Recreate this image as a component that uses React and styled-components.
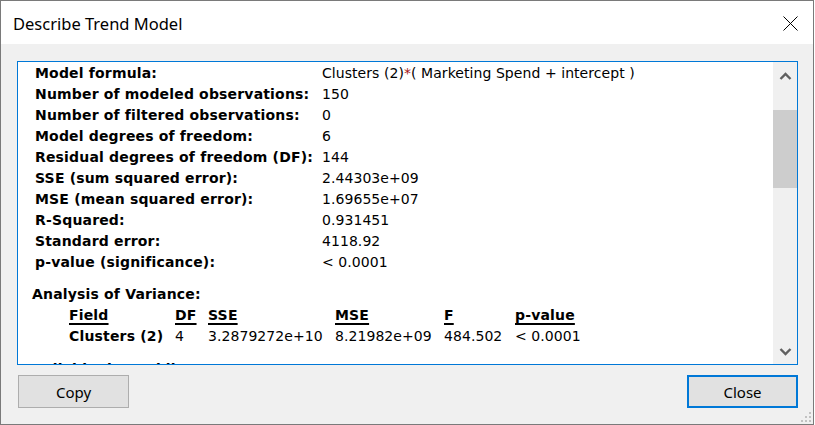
import React from 'react';
import styled, {createGlobalStyle} from 'styled-components';

const GlobalStyle = createGlobalStyle`
  html, body {
    margin: 0;
    padding: 0;
    background: #ffffff;
  }
  * {
    box-sizing: border-box;
  }
`;

const Window = styled.div`
  position: relative;
  width: 814px;
  height: 425px;
  border: 1px solid #7a7a7a;
  display: flex;
  flex-direction: column;
  background: #f0f0f0;
`;

const TitleBar = styled.div`
  height: 43px;
  background: #ffffff;
  display: flex;
  align-items: center;
  justify-content: space-between;
  padding: 0 15px 0 12px;
`;

const Title = styled.div`
  font-family: "Noto Sans", "Open Sans", sans-serif;
  font-size: 16.5px;
  color: #000;
  margin-top: 1px;
`;

const CloseGlyph = styled.svg`
  width: 15px;
  height: 15px;
  margin-top: 1px;
`;

const Body = styled.div`
  flex: 1;
  display: flex;
  flex-direction: column;
  padding: 17px 15px 0 16px;
`;

const Panel = styled.div`
  height: 304px;
  border: 1px solid #0078d7;
  background: #ffffff;
  display: flex;
`;

const Content = styled.div`
  flex: 1;
  overflow: hidden;
  padding: 1px 0 0 17px;
  font-family: "DejaVu Sans", Verdana, sans-serif;
  font-size: 14px;
  line-height: 21px;
  color: #000;
`;

const Summary = styled.div`
  display: grid;
  grid-template-columns: 287px 1fr;
`;

const Label = styled.div`
  font-weight: bold;
  letter-spacing: 0.17px;
  white-space: nowrap;
`;

const Value = styled.div`
  white-space: nowrap;
  letter-spacing: 0.06px;
`;

const Star = styled.span`
  color: #a31515;
`;

const Heading = styled.div`
  font-weight: bold;
  letter-spacing: 0.17px;
  margin: ${p => (p.$last ? '12px' : '11px')} 0 0 -3px;
  white-space: nowrap;
`;

const Table = styled.div`
  display: grid;
  grid-template-columns: 106px 33px 127px 109px 71px 1fr;
  margin-left: 34px;
`;

const Cell = styled.div`
  white-space: nowrap;
  font-weight: ${p => (p.$bold ? 'bold' : 'normal')};
  letter-spacing: ${p => (p.$bold ? '0.17px' : '0.06px')};
  text-decoration: ${p => (p.$head ? 'underline' : 'none')};
  text-decoration-thickness: 2px;
  text-underline-offset: 3px;
`;

const Scrollbar = styled.div`
  width: 24px;
  background: #f0f0f0;
  display: flex;
  flex-direction: column;
`;

const ArrowBox = styled.div`
  height: 25px;
  display: flex;
  align-items: center;
  justify-content: center;
  padding-top: ${p => (p.$down ? '0' : '4px')};
`;

const Track = styled.div`
  flex: 1;
`;

const Thumb = styled.div`
  margin-top: 23px;
  height: 78px;
  background: #cdcdcd;
`;

const ButtonRow = styled.div`
  display: flex;
  justify-content: space-between;
  margin-top: 10px;
  padding-left: 1px;
`;

const Button = styled.div`
  width: 111px;
  height: 33px;
  display: flex;
  align-items: center;
  justify-content: center;
  background: #e1e1e1;
  border: ${p => (p.$primary ? '2px solid #0078d7' : '1px solid #adadad')};
  font-family: "Noto Sans", "Open Sans", sans-serif;
  font-size: 15px;
  color: #000;
`;

const Grip = styled.svg`
  position: absolute;
  right: 0;
  bottom: 0;
  width: 14px;
  height: 14px;
`;

const summary = [
  ['Model formula:', null],
  ['Number of modeled observations:', '150'],
  ['Number of filtered observations:', '0'],
  ['Model degrees of freedom:', '6'],
  ['Residual degrees of freedom (DF):', '144'],
  ['SSE (sum squared error):', '2.44303e+09'],
  ['MSE (mean squared error):', '1.69655e+07'],
  ['R-Squared:', '0.931451'],
  ['Standard error:', '4118.92'],
  ['p-value (significance):', '< 0.0001'],
];

const headers = ['Field', 'DF', 'SSE', 'MSE', 'F', 'p-value'];
const row = ['Clusters (2)', '4', '3.2879272e+10', '8.21982e+09', '484.502', '< 0.0001'];

const Chevron = ({down}) => (
  <svg width="13" height="9" viewBox="0 0 13 9">
    <path
      d={down ? 'M1.5 2 L6.5 7 L11.5 2' : 'M1.5 7 L6.5 2 L11.5 7'}
      fill="none"
      stroke="#606060"
      strokeWidth="2.4"
    />
  </svg>
);

const App = () => {
  return (
    <Window>
      <GlobalStyle />
      <TitleBar>
        <Title>Describe Trend Model</Title>
        <CloseGlyph viewBox="0 0 15 15">
          <path d="M0.5 0.5 L14.5 14.5 M14.5 0.5 L0.5 14.5" stroke="#000" strokeWidth="1" />
        </CloseGlyph>
      </TitleBar>
      <Body>
        <Panel>
          <Content>
            <Summary>
              {summary.map(([label, value]) => (
                <React.Fragment key={label}>
                  <Label>{label}</Label>
                  <Value>
                    {value === null ? (
                      <>Clusters (2)<Star>*</Star>( Marketing Spend + intercept )</>
                    ) : value}
                  </Value>
                </React.Fragment>
              ))}
            </Summary>
            <Heading>Analysis of Variance:</Heading>
            <Table>
              {headers.map(h => (
                <Cell key={h} $bold $head>{h}</Cell>
              ))}
              {row.map((c, i) => (
                <Cell key={i} $bold={i === 0}>{c}</Cell>
              ))}
            </Table>
            <Heading $last>Individual trend lines:</Heading>
          </Content>
          <Scrollbar>
            <ArrowBox><Chevron /></ArrowBox>
            <Track><Thumb /></Track>
            <ArrowBox $down><Chevron down /></ArrowBox>
          </Scrollbar>
        </Panel>
        <ButtonRow>
          <Button>Copy</Button>
          <Button $primary>Close</Button>
        </ButtonRow>
      </Body>
      <Grip viewBox="0 0 14 14">
        {[[10, 2], [6, 6], [10, 6], [2, 10], [6, 10], [10, 10]].map(([x, y]) => (
          <rect key={`${x}-${y}`} x={x} y={y} width="2" height="2" fill="#c2c2c2" />
        ))}
      </Grip>
    </Window>
  );
};

export default App;
